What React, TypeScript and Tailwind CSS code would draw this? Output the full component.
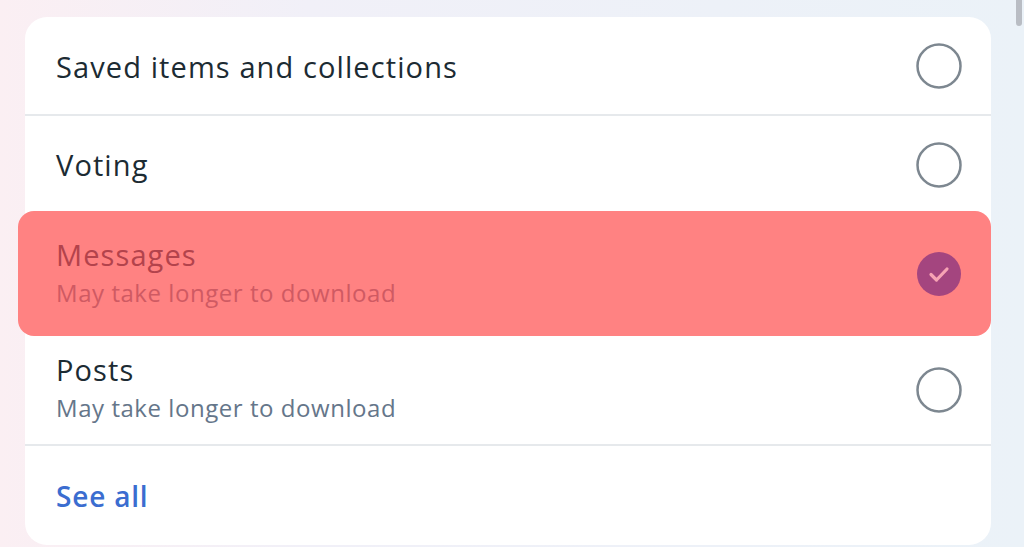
import React from "react";

function Circle({ checked }: { checked?: boolean }) {
  if (checked) {
    return (
      <svg width="46" height="46" viewBox="0 0 46 46" className="shrink-0">
        <circle cx="23" cy="23" r="22" fill="#a4457f" />
        <path d="M15 23.5 L20.5 29 L31 18" fill="none" stroke="#f7a3b4" strokeWidth="3.2" strokeLinecap="round" strokeLinejoin="round" />
      </svg>
    );
  }
  return (
    <svg width="46" height="46" viewBox="0 0 46 46" className="shrink-0">
      <circle cx="23" cy="23" r="21.5" fill="none" stroke="#7d8790" strokeWidth="2.5" />
    </svg>
  );
}

export default function App() {
  return (
    <div
      className="relative h-[547px] w-[1024px] overflow-hidden bg-[linear-gradient(90deg,#fbeff3_0%,#f1f0f8_30%,#edf1f8_70%,#ebf2f8_100%)] pl-[25px] pr-[33px] pt-[17px]"
      style={{ fontFamily: '"Open Sans", "Noto Sans", sans-serif' }}
    >
      <div className="absolute right-[2px] top-0 h-[26px] w-[6px] rounded-b-full bg-[#b9bdc4]" />
      <div className="flex h-[528px] flex-col rounded-[22px] bg-white">
        <div className="flex h-[99px] shrink-0 items-center justify-between border-b-2 border-[#e6e9ec] pl-[31px] pr-[29px]">
          <span className="pt-[2px] text-[29px] font-medium tracking-[1.1px] text-[#1c2b33]">Saved items and collections</span>
          <Circle />
        </div>
        <div className="flex h-[97px] shrink-0 items-center justify-between pl-[31px] pr-[29px]">
          <span className="text-[29px] font-medium tracking-[1.1px] text-[#1c2b33]">Voting</span>
          <Circle />
        </div>
        <div className="-ml-[7px] -mt-[2px] flex h-[125px] shrink-0 items-center justify-between rounded-[16px] bg-[#ff8282] pl-[38px] pr-[29px]">
          <div className="flex flex-col">
            <span className="text-[29px] font-medium leading-[38px] tracking-[1.1px] text-[#b3434c]">Messages</span>
            <span className="text-[24px] leading-[38px] tracking-[0.55px] text-[#cf5a63]">May take longer to download</span>
          </div>
          <Circle checked />
        </div>
        <div className="flex h-[110px] shrink-0 items-center justify-between border-b-2 border-[#e6e9ec] pl-[31px] pr-[29px]">
          <div className="-mt-[3px] flex flex-col">
            <span className="text-[29px] font-medium leading-[38px] tracking-[1.1px] text-[#1c2b33]">Posts</span>
            <span className="text-[24px] leading-[38px] tracking-[0.55px] text-[#65768a]">May take longer to download</span>
          </div>
          <Circle />
        </div>
        <div className="flex flex-1 items-center pl-[31px]">
          <span className="text-[28px] font-semibold tracking-[0.8px] text-[#3b6dd0]">See all</span>
        </div>
      </div>
    </div>
  );
}
